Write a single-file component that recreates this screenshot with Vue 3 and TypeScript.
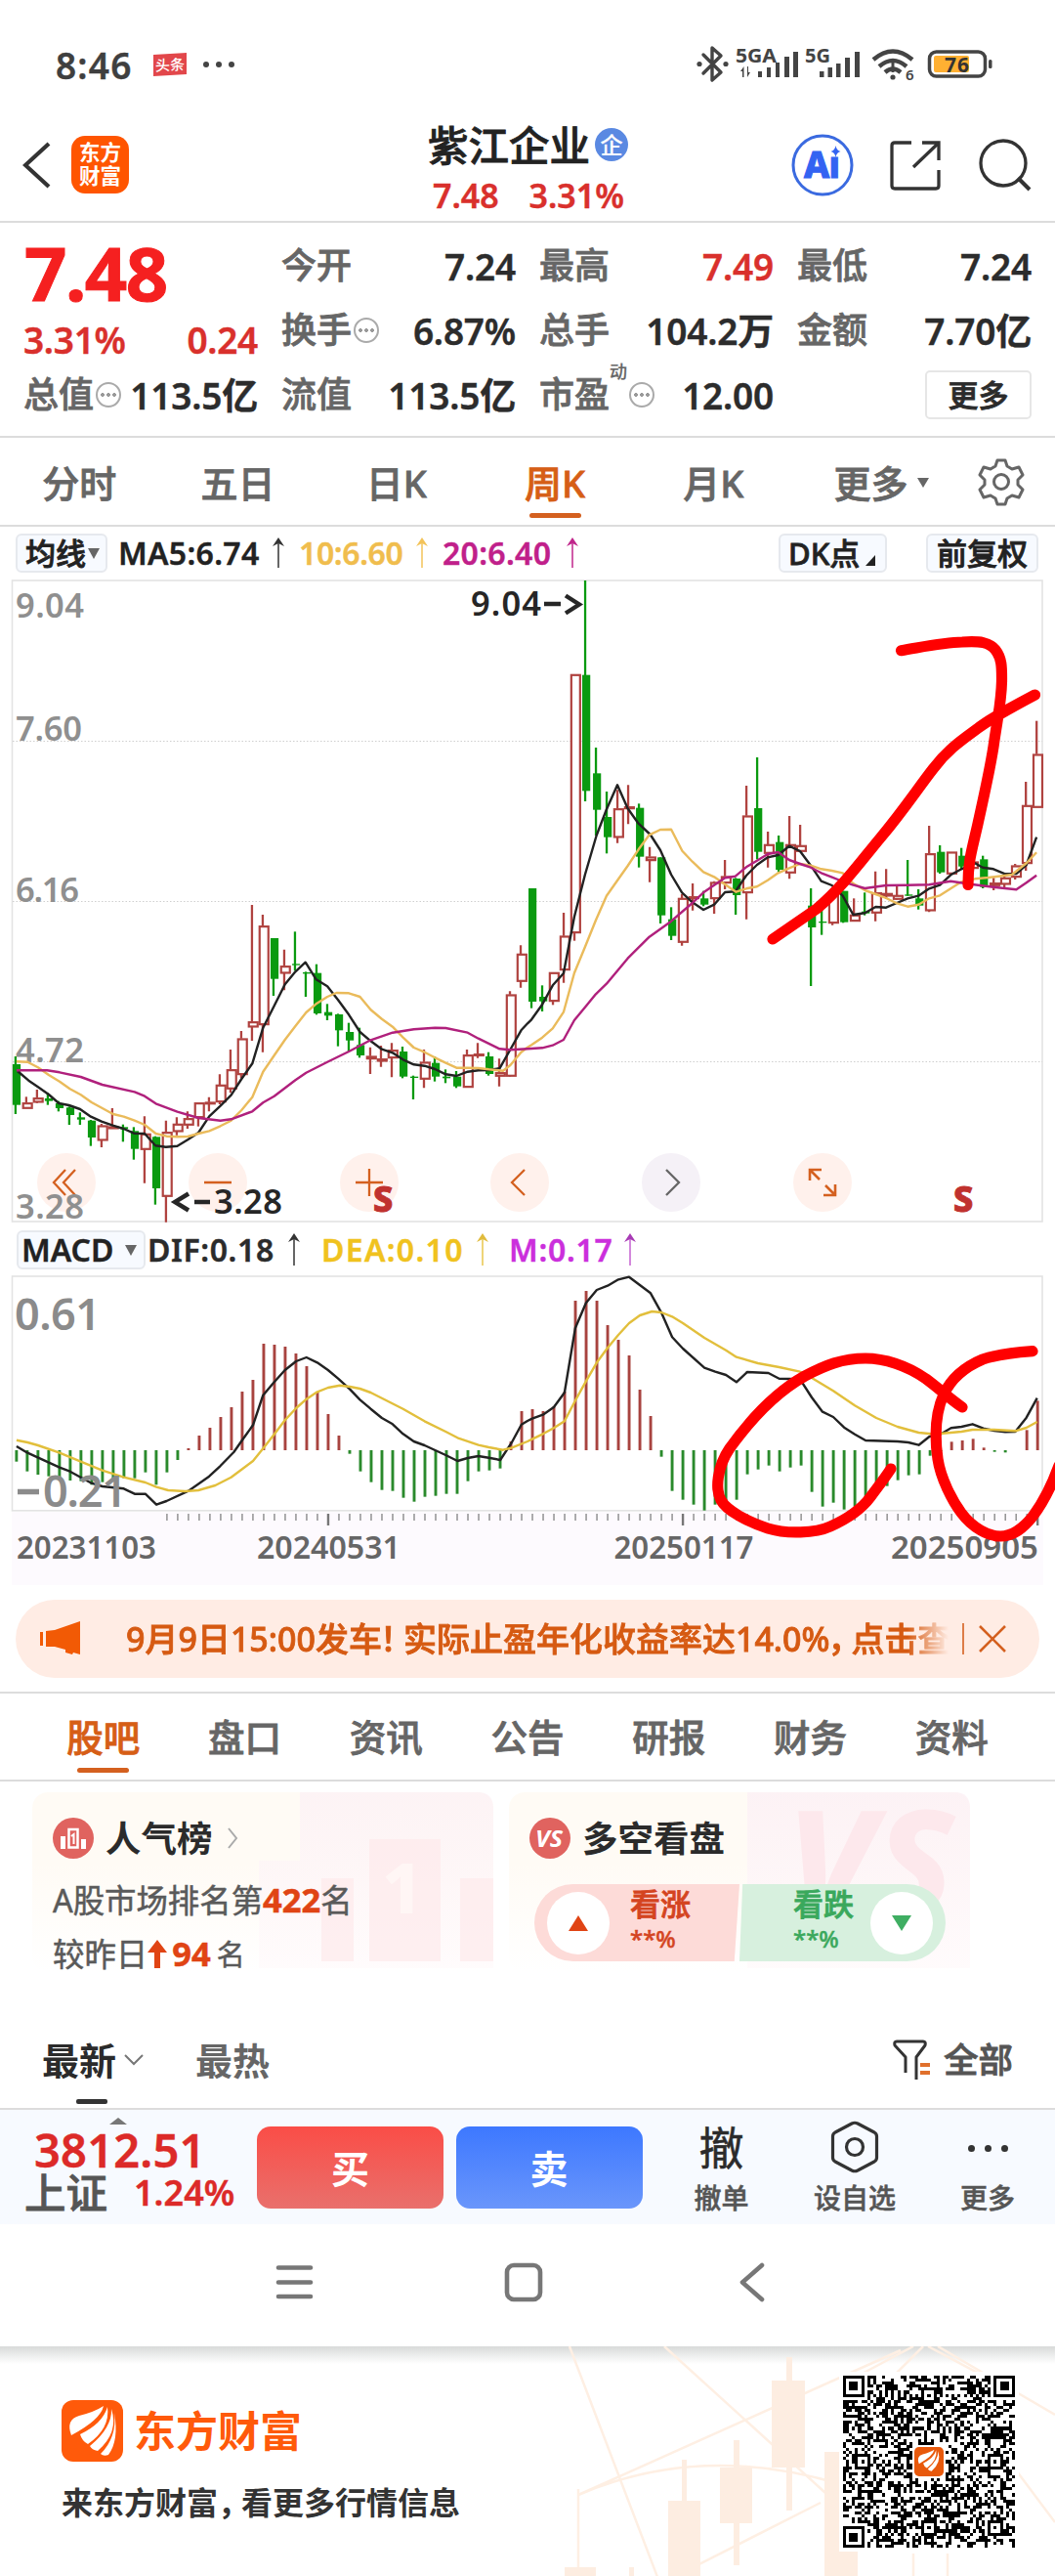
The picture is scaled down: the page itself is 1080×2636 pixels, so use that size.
<script setup lang="ts">
type Pt = [number, number]
type Candle = [0 | 1, number, number, number, number]

// Series data is stored on a fine grid; these map a grid point to chart pixels.
const SX = 2.9037
const SY = 3
const STEP = 31.95
const line = (left: number[], right: number[], top: number): string => {
  const out: string[] = []
  const add = (a: number[], off: number) => {
    for (let i = 0; i < a.length; i += 2) {
      out.push(`${((a[i] + off) / SX).toFixed(1)},${(top + a[i + 1] / SY).toFixed(1)}`)
    }
  }
  add(left, 0)
  add(right, 1568)
  return out.join(' ')
}

// [rising, high, body top, body bottom, low]
const candles: Candle[] = [
  [0, 543, 567, 692, 720], [1, 667, 685, 702, 702], [1, 645, 670, 683, 686], [0, 655, 672, 680, 692],
  [0, 680, 687, 702, 712], [0, 697, 700, 723, 753], [0, 715, 730, 737, 753], [0, 738, 740, 792, 818],
  [1, 750, 755, 800, 822], [1, 702, 758, 764, 764], [0, 752, 760, 766, 805], [0, 760, 772, 827, 860],
  [1, 727, 780, 828, 932], [0, 788, 790, 948, 998], [1, 740, 775, 972, 1052], [1, 730, 750, 773, 785],
  [1, 712, 733, 753, 765], [1, 685, 685, 730, 758], [1, 668, 683, 687, 712], [1, 598, 630, 682, 690],
  [1, 522, 583, 642, 655], [1, 465, 488, 598, 610], [1, 78, 436, 452, 495], [1, 108, 142, 445, 530],
  [0, 180, 180, 305, 357], [1, 215, 265, 287, 340], [0, 160, 259, 262, 280], [0, 283, 285, 289, 360],
  [0, 260, 287, 411, 415], [0, 382, 407, 418, 432], [0, 412, 414, 463, 512], [0, 440, 468, 494, 528],
  [0, 455, 508, 540, 547], [1, 515, 542, 550, 597], [1, 510, 550, 557, 575], [1, 502, 523, 547, 607],
  [0, 513, 528, 605, 610], [0, 602, 605, 609, 675], [1, 522, 560, 612, 640], [0, 543, 563, 605, 620],
  [0, 583, 605, 610, 625], [0, 588, 605, 635, 640], [1, 522, 538, 637, 637], [1, 502, 535, 540, 548],
  [0, 530, 543, 597, 602], [1, 550, 592, 603, 635], [1, 343, 353, 603, 605], [1, 202, 228, 312, 332],
  [0, 27, 27, 375, 395], [0, 325, 360, 374, 405], [1, 285, 285, 373, 385], [1, 102, 173, 277, 317],
  [1, -630, -630, 163, 188], [0, -918, -628, -272, -240], [0, -405, -326, -214, -135], [0, -270, -192, -130, -80],
  [1, -275, -218, -130, -112], [1, -290, -224, -218, -170], [0, -233, -220, -70, -37], [1, -100, -70, -59, 8],
  [0, -68, -68, 110, 135], [0, 85, 122, 173, 186], [1, 45, 57, 192, 203], [1, 12, 52, 58, 95],
  [0, 35, 58, 77, 82], [1, 5, 8, 58, 105], [1, -60, -10, 10, 30], [0, -5, -3, 48, 108],
  [1, -288, -196, 40, 122], [0, -375, -219, -85, -62], [1, -147, -108, -81, -37], [0, -135, -115, -30, -22],
  [1, -195, -108, -21, -2], [1, -168, -105, -87, -87], [0, 27, 80, 147, 327], [0, 80, 129, 132, 170],
  [1, 30, 45, 133, 140], [0, 35, 35, 131, 133], [1, 58, 108, 127, 127], [0, 40, 98, 104, 110],
  [1, -25, 40, 102, 128], [1, -32, 42, 50, 60], [1, 15, 48, 60, 62], [0, -60, 46, 50, 50],
  [0, 30, 58, 80, 92], [1, -165, -80, 95, 100], [0, -105, -85, -22, -18], [1, -85, -85, -18, -18],
  [0, -97, -73, -40, -30], [1, -70, -55, -35, -30], [0, -73, -62, 23, 27], [1, -5, 10, 18, 33],
  [1, -12, -6, 14, 27], [1, -48, -43, -8, 0], [1, -300, -228, -50, -27], [1, -487, -385, -222, -222],
]
const bars = candles.map(([up, h, t, b, l], i) => {
  const x = (49 + STEP * i) / SX
  return {
    up: up === 1, x,
    high: 900 + h / SY, top: 900 + t / SY, bottom: 900 + b / SY, low: 900 + l / SY,
  }
})

const ma5 = line(
  [52,588,85,617,115,638,145,660,175,687,205,693,238,705,270,728,302,743,335,755,367,765,398,779,430,780,462,817,493,821,527,818,558,799,590,777,622,727,655,695,687,662,718,612,750,565,782,455,815,388,847,322,878,283,908,254,940,307,973,328,1005,370,1037,415,1070,468,1102,496,1135,521,1167,532,1198,553,1230,568,1262,572,1293,582,1325,598,1357,603,1390,590,1422,586,1453,585,1485,580,1517,522,1549,463],
  [0,442,12,430,44,383,75,325,107,288,139,115,171,-15,205,-135,235,-215,267,-290,298,-218,330,-172,365,-138,395,-90,427,-15,459,40,490,70,523,93,555,77,587,39,618,37,650,-12,682,-45,714,-68,745,-75,778,-103,810,-87,842,-43,873,5,905,18,937,50,968,108,1003,103,1035,84,1066,86,1098,72,1130,58,1162,50,1194,28,1226,17,1258,-14,1290,-32,1330,-50,1353,-37,1385,-32,1420,-17,1453,-18,1483,-45,1513,-130], 900)
const ma10 = line(
  [49,559,82,560,113,577,145,600,177,620,208,643,240,661,272,684,304,702,336,720,368,728,400,740,430,753,463,780,495,788,527,790,558,789,590,780,622,772,655,757,687,740,718,708,750,668,782,590,815,540,847,492,878,450,910,408,942,380,973,360,1000,348,1037,349,1070,360,1102,400,1135,428,1167,452,1198,485,1230,516,1262,530,1293,547,1325,563,1357,578,1390,578,1422,579,1453,583,1495,587,1517,570,1549,530],
  [0,515,12,508,44,485,75,457,107,407,139,287,171,207,203,125,235,50,267,3,298,-42,330,-92,362,-137,395,-153,427,-154,460,-88,490,-55,523,-23,555,-8,587,15,620,38,650,28,682,22,714,2,745,-20,778,-35,810,-48,842,-43,873,-32,905,-27,937,-20,968,12,1003,33,1035,45,1066,57,1098,73,1130,83,1162,77,1194,58,1226,49,1258,28,1290,7,1330,-2,1370,-6,1400,-10,1440,-15,1483,-50,1513,-83], 900)
const ma20 = line(
  [49,586,140,586,177,592,240,606,304,630,400,652,430,665,463,688,527,713,590,732,655,740,687,736,750,712,782,685,815,665,878,616,910,593,973,560,1037,528,1102,493,1167,470,1230,460,1293,455,1325,456,1390,470,1422,488,1485,520,1517,523],
  [0,520,12,519,44,517,75,509,107,492,139,432,171,392,203,352,235,320,298,242,362,176,427,128,490,72,523,40,555,17,587,-5,618,-10,650,-38,682,-58,714,-78,745,-84,778,-60,810,-48,842,-37,873,-20,905,-7,937,6,968,17,1003,27,1066,18,1130,17,1194,16,1258,5,1322,15,1385,23,1453,31,1483,10,1513,-13], 900)

const dif = line(
  [49,720,82,740,177,785,208,797,272,833,304,843,368,850,400,866,432,866,465,899,495,888,560,857,622,812,655,780,695,738,722,698,752,655,782,563,815,523,847,486,880,459,911,447,943,463,975,486,1005,512,1040,545,1070,577,1102,605,1135,633,1167,652,1198,682,1230,705,1262,717,1325,747,1360,765,1390,756,1422,750,1453,755,1487,762,1520,710,1550,653],
  [0,642,14,635,46,623,78,600,110,555,142,357,174,280,206,240,238,227,270,208,302,200,366,250,398,310,430,385,462,420,526,479,558,491,590,501,621,523,653,492,716,495,748,512,810,514,845,570,877,614,909,630,941,662,973,683,1005,702,1100,705,1132,708,1163,716,1195,690,1227,683,1259,664,1290,660,1323,652,1355,665,1387,672,1420,676,1450,675,1483,632,1515,572], 1240)
const dea = line(
  [49,701,82,708,113,717,177,740,240,767,304,794,368,815,432,831,465,845,500,855,550,858,590,855,640,840,687,815,720,790,752,765,782,727,815,683,847,640,880,603,911,575,943,553,975,540,1010,533,1040,537,1070,543,1102,555,1135,572,1198,605,1262,643,1325,675,1360,694,1422,716,1453,723,1495,731,1520,725],
  [0,705,14,698,46,682,78,664,110,643,142,580,174,520,206,463,238,418,270,378,302,342,334,318,370,306,398,309,430,322,462,342,526,387,590,425,621,446,685,465,748,477,810,491,845,510,909,550,973,595,1037,633,1100,660,1163,678,1200,682,1227,681,1290,675,1323,669,1387,669,1450,673,1483,663,1515,645], 1240)
const hist = [
  767,797,807,812,817,825,827,838,830,825,818,818,800,838,800,762,726,687,663,630,600,552,516,405,408,414,435,474,552,621,687,743,797,830,854,857,878,890,875,872,866,866,827,797,794,788,705,612,
  606,612,597,552,273,243,273,348,393,441,546,627,752,857,884,899,917,899,905,884,806,791,779,797,785,779,860,905,893,914,905,875,860,842,824,809,806,749,735,706,702,697,724,737,739,732,670,580,
].map((v, i) => ({ x: (49 + STEP * i) / SX, y: 1240 + v / SY, up: v < 732 }))
const ticks = Array.from({ length: 82 }, (_, k) => k + 14).map(i => ({
  x: (49 + STEP * i) / SX, major: i === 29 || i === 62 || i === 95,
}))

const tools = [68, 223, 378, 532, 687, 842]
const periods = ['分时', '五日', '日K', '周K', '月K']
const sections = ['股吧', '盘口', '资讯', '公告', '研报', '财务', '资料']

// QR code: finder, alignment and timing patterns with a filled data area.
const N = 57
const qr = (() => {
  let seed = 20250905
  const rnd = () => {
    seed = (Math.imul(seed, 1103515245) + 12345) & 0x7fffffff
    return (seed >> 12) & 1
  }
  const ring = (x: number, y: number, cx: number, cy: number) => Math.max(Math.abs(x - cx), Math.abs(y - cy))
  const finders: Pt[] = [[3, 3], [53, 3], [3, 53]]
  const aligns: Pt[] = [[28, 6], [50, 28], [6, 28], [28, 50], [50, 50]]
  let d = ''
  for (let y = 0; y < N; y++) {
    for (let x = 0; x < N; x++) {
      let on = rnd() === 1
      if (x === 6 || y === 6) on = (x + y) % 2 === 0
      for (const [cx, cy] of aligns) {
        const r = ring(x, y, cx, cy)
        if (r <= 2) on = r !== 1
      }
      for (const [cx, cy] of finders) {
        const r = ring(x, y, cx, cy)
        if (r <= 4) on = r !== 2 && r !== 4
      }
      if (ring(x, y, 28, 28) <= 5) on = false
      if (on) d += `M${x} ${y}h1v1h-1z`
    }
  }
  return d
})()
</script>

<template>
  <div class="screen">
    <header class="status">
      <span class="clock">8:46</span>
      <span class="news">头条</span>
      <i class="dots"><b></b><b></b><b></b></i>
      <svg class="sys" width="320" height="50" viewBox="706 41 320 50">
        <g fill="none" stroke="#444" stroke-width="3.4" stroke-linejoin="round" stroke-linecap="round">
          <path d="M720 56l18 18-9 8V49l9 8-18 18" />
        </g>
        <circle cx="716" cy="65.500" r="2.600" fill="#444" /><circle cx="743" cy="65.500" r="2.600" fill="#444" />
        <g fill="#444">
          <text x="753" y="64" font-size="19.500" font-weight="700" textLength="42" lengthAdjust="spacingAndGlyphs">5GA</text>
          <text x="824" y="64" font-size="19.500" font-weight="700" textLength="26" lengthAdjust="spacingAndGlyphs">5G</text>
          <path d="M760 79v-6h-2l3.500-5v11zM766 68v6h2l-3 5v-11zM776 79v-6h4v6zM785 79V69h4v10zM794 79V64h4v15zM803 79V58h5v21zM812 79V53h5v26z" />
          <path d="M839 79v-6h4.500v6zM847.500 79V69h4.500v10zM856 79V65h4.500v14zM865 79V59h5v20zM875 79V53h5v26z" />
          <circle cx="914" cy="79" r="2.600" />
          <text x="927" y="82" font-size="15" font-weight="600">6</text>
        </g>
        <g fill="none" stroke="#444" stroke-width="4.400">
          <path d="M894 61q20-17 40 0M900 68q14-12 28 0M906 74q8-7 16 0" />
          <path d="M914 63v11" stroke-width="3" />
        </g>
        <rect x="951.500" y="53" width="57" height="25" rx="7" fill="#fff" stroke="#444" stroke-width="3.500" />
        <rect x="956" y="57" width="36" height="17" rx="2" fill="#ffb032" />
        <rect x="1012" y="61" width="3.500" height="9" rx="1.500" fill="#444" />
        <text x="967" y="73.500" font-size="21" font-weight="700" fill="#333" textLength="25">76</text>
      </svg>
    </header>

    <div class="head">
      <svg class="back" width="30" height="48" viewBox="0 0 30 48"><path d="M27 2L3 24l24 22" fill="none" stroke="#333" stroke-width="4.200" /></svg>
      <span class="app">东方<br />财富</span>
      <div class="title">
        <div class="name">紫江企业<i>企</i></div>
        <div class="sub"><span>7.48</span><span>3.31%</span></div>
      </div>
      <svg class="acts" width="250" height="70" viewBox="806 134 250 70" fill="none">
        <circle cx="842" cy="169" r="30" stroke="#3a6ae0" stroke-width="3" />
        <text x="823" y="182" font-size="37" font-weight="800" fill="#3363f2" stroke="#3363f2" stroke-width="1" textLength="37">Aı</text>
        <path d="M855.500 149q.8 5.200 5 6-4.200.8-5 6-.8-5.200-5-6 4.200-.8 5-6z" fill="#3363f2" />
        <g stroke="#333" stroke-width="3.300">
          <path d="M933 146h-17q-3 0-3 3v41q0 3 3 3h42q3 0 3-3v-16M944 146h17v18M960 147l-25 24" />
          <circle cx="1027" cy="167" r="23" /><path d="M1042 182l12 12" stroke-width="4" />
        </g>
      </svg>
    </div>

    <section class="quote">
      <div class="col first">
        <div class="big">7.48</div>
        <div class="chg"><span>3.31%</span><span>0.24</span></div>
        <div class="cell"><label>总值</label><i class="info"></i><b>113.5亿</b></div>
      </div>
      <div class="col">
        <div class="cell"><label>今开</label><b>7.24</b></div>
        <div class="cell"><label>换手</label><i class="info"></i><b>6.87%</b></div>
        <div class="cell"><label>流值</label><b>113.5亿</b></div>
      </div>
      <div class="col">
        <div class="cell"><label>最高</label><b class="red">7.49</b></div>
        <div class="cell"><label>总手</label><b>104.2万</b></div>
        <div class="cell"><label>市盈<sup>动</sup></label><i class="info pe"></i><b>12.00</b></div>
      </div>
      <div class="col">
        <div class="cell"><label>最低</label><b>7.24</b></div>
        <div class="cell"><label>金额</label><b>7.70亿</b></div>
        <div class="cell end"><span class="morebtn">更多</span></div>
      </div>
    </section>

    <nav class="periods">
      <span v-for="p in periods" :key="p" :class="{ on: p === '周K' }">{{ p }}</span>
      <span class="pm">更多<i></i></span>
      <svg width="48" height="50" viewBox="0 0 48 50" fill="none" stroke="#666" stroke-width="3" stroke-linejoin="round">
        <path d="M20 3h8l2 6 5 3 7-2 4 8-5 5v5l5 5-4 8-7-2-5 3-2 6h-8l-2-6-5-3-7 2-4-8 5-5v-5l-5-5 4-8 7 2 5-3z" /><circle cx="24" cy="25" r="7.500" />
      </svg>
    </nav>

    <div class="legend ma">
      <span class="pill avg">均线<i class="dn"></i></span>
      <span class="k1">MA5:6.74</span><svg class="up" width="14" height="32" viewBox="0 0 14 32"><path d="M7 31V2" stroke="#333" stroke-width="1.500" /><path d="M7 0L1 9l6-3 6 3z" fill="#333" /></svg>
      <span class="k2">10:6.60</span><svg class="up" width="14" height="32" viewBox="0 0 14 32"><path d="M7 31V2" stroke="#f3c35a" stroke-width="1.500" /><path d="M7 0L1 9l6-3 6 3z" fill="#f3c35a" /></svg>
      <span class="k3">20:6.40</span><svg class="up" width="14" height="32" viewBox="0 0 14 32"><path d="M7 31V2" stroke="#c0268b" stroke-width="1.500" /><path d="M7 0L1 9l6-3 6 3z" fill="#c0268b" /></svg>
      <span class="pill dk">DK点<i></i></span>
      <span class="pill fq">前复权</span>
    </div>

    <svg class="chart" width="1080" height="660" viewBox="0 593 1080 660">
      <rect x="12.500" y="594" width="1054.500" height="656" fill="none" stroke="#e3e3e3" stroke-width="1.600" />
      <g stroke="#cfcfcf" stroke-width="1" stroke-dasharray="1.500 2">
        <path d="M13 758.500H1067M13 922.500H1067M13 1086.500H1067" />
      </g>
      <g v-for="(x, i) in tools" :key="x">
        <circle :cx="x" cy="1210" r="30" :fill="i === 4 ? '#f5f1f7' : '#fff1ec'" />
      </g>
      <g fill="none" stroke="#d4601f" stroke-width="2.300">
        <path d="M67 1197l-12 13 12 13M77 1197l-12 13 12 13M209 1210h28M364 1210h28M378 1196v28M537 1197l-13 13 13 13" />
        <path d="M682 1197l13 13-13 13" stroke="#666" />
        <path d="M829 1208v-11h12M829 1197l10 10M855 1212v11h-12M855 1223l-10-10" stroke-width="2.600" />
      </g>
      <g fill="#8f8f8f" font-size="34.500" font-weight="600">
        <text x="16" y="632" textLength="70">9.04</text>
        <text x="16" y="758" textLength="68">7.60</text>
        <text x="16" y="922.500" textLength="65">6.16</text>
        <text x="16" y="1087" textLength="70">4.72</text>
        <text x="16" y="1246.500" textLength="70">3.28</text>
      </g>
      <g v-for="(b, i) in bars" :key="i">
        <template v-if="b.up">
          <path :d="`M${b.x - 1} ${b.high}V${b.top}M${b.x - 1} ${b.bottom}V${b.low}`" stroke="#b04340" stroke-width="2.300" />
          <rect :x="b.x - 4.200" :y="b.top + .8" width="9" :height="Math.max(b.bottom - b.top - 1, .8)" fill="#fff" stroke="#b04340" stroke-width="2.200" />
        </template>
        <template v-else>
          <path :d="`M${b.x - 1} ${b.high}V${b.low}`" stroke="#0a9a10" stroke-width="2.300" />
          <rect :x="b.x - 4" :y="b.top" width="8.200" :height="Math.max(b.bottom - b.top, 1.300)" fill="#0a9a10" />
        </template>
      </g>
      <g fill="none" stroke-width="2.400" stroke-linejoin="round">
        <polyline :points="ma5" stroke="#222" />
        <polyline :points="ma10" stroke="#eabb5b" />
        <polyline :points="ma20" stroke="#b0207c" />
      </g>
      <g fill="#262626" font-size="34.500" font-weight="600">
        <text x="482" y="630" textLength="72">9.04</text>
        <path d="M557 618h17M579 609.500l14 9-14 9" fill="none" stroke="#262626" stroke-width="4.400" />
        <path d="M193 1221.500l-14 8.500 14 8.500M199 1230h16" fill="none" stroke="#262626" stroke-width="4.400" />
        <text x="219" y="1241.500" textLength="70">3.28</text>
      </g>
      <g fill="#c0322e" font-size="36" font-weight="800" stroke="#c0322e" stroke-width="1">
        <text x="382" y="1240">S</text><text x="976" y="1240">S</text>
      </g>
      <g fill="none" stroke="#f00" stroke-width="11.200" stroke-linecap="round" stroke-linejoin="round">
        <path d="M922.500 665.700C945 662 965 657.500 985 657C1004 656 1012 657 1019 665C1026 674 1025.500 684 1025.500 697C1025 720 1021 735 1017 764C1013 790 1006 820 1001 843C995 870 991 880 991 905.500" />
        <path d="M791 961L836 930C862 908 880 883 901.600 857C925 829 938 809 955 787C970 767 985 757 1000 746C1010 738 1022 731 1059.500 711" />
      </g>
    </svg>

    <div class="legend macd">
      <span class="pill">MACD<i class="dn"></i></span>
      <span class="d1">DIF:0.18</span><svg class="up" width="14" height="34" viewBox="0 0 14 34"><path d="M7 33V2" stroke="#333" stroke-width="1.500" /><path d="M7 0L1 9l6-3 6 3z" fill="#333" /></svg>
      <span class="d2">DEA:0.10</span><svg class="up" width="14" height="34" viewBox="0 0 14 34"><path d="M7 33V2" stroke="#e9c64b" stroke-width="1.500" /><path d="M7 0L1 9l6-3 6 3z" fill="#e0bb3c" /></svg>
      <span class="d3">M:0.17</span><svg class="up" width="14" height="34" viewBox="0 0 14 34"><path d="M7 33V2" stroke="#c45fd0" stroke-width="1.500" /><path d="M7 0L1 9l6-3 6 3z" fill="#a83bb5" /></svg>
    </div>

    <svg class="chart" width="1080" height="317" viewBox="0 1305 1080 317">
      <rect x="12" y="1547" width="1056" height="75" fill="#fdfafe" />
      <rect x="12.500" y="1306" width="1054.500" height="239.800" fill="#fff" stroke="#e3e3e3" stroke-width="1.600" />
      <path v-for="(h, i) in hist" :key="i" :d="`M${h.x} 1484V${h.y}`" :stroke="h.up ? '#a8433f' : '#2a8a2c'" stroke-width="2.900" />
      <path v-for="t in ticks" :key="t.x" :d="`M${t.x} 1549V${t.major ? 1561 : 1556}`" stroke="#777" :stroke-width="t.major ? 2.4 : 1.2" />
      <g fill="none" stroke-width="2.400" stroke-linejoin="round">
        <polyline :points="dif" stroke="#222" />
        <polyline :points="dea" stroke="#e2bf3c" />
      </g>
      <g fill="#8b8b8b" font-size="45" font-weight="600">
        <text x="15" y="1361" textLength="88">0.61</text>
        <path d="M18 1526.500h22" stroke="#8b8b8b" stroke-width="5.500" />
        <text x="44" y="1542" textLength="86">0.21</text>
      </g>
      <g fill="#666" font-size="32.500" font-weight="600">
        <text x="17" y="1595" textLength="143" lengthAdjust="spacingAndGlyphs">20231103</text>
        <text x="263" y="1595" textLength="147" lengthAdjust="spacingAndGlyphs">20240531</text>
        <text x="628.500" y="1595" textLength="143" lengthAdjust="spacingAndGlyphs">20250117</text>
        <text x="912" y="1595" textLength="151" lengthAdjust="spacingAndGlyphs">20250905</text>
      </g>
      <g fill="none" stroke="#f00" stroke-width="11.200" stroke-linecap="round" stroke-linejoin="round">
        <path d="M985 1440C972 1431 964 1423 948 1411C928 1397 905 1390 886 1390C862 1390 845 1397 824 1408C790 1427 765 1457 747 1482C734 1501 732 1524 738 1535C744 1546 765 1557 786 1564C805 1570 835 1569 850 1562C868 1554 882 1544 891 1532C899 1521 904 1515 912 1503" />
        <path d="M1057 1382.700C1040 1384 1020 1386 1006 1391C987 1399 973 1412 966 1427C957 1447 957 1472 960 1493C963 1513 975 1536 984 1548C996 1564 1012 1572 1024 1572C1038 1572 1048 1563 1057 1552C1069 1536 1076 1522 1084 1500" />
      </g>
    </svg>

    <div class="banner">
      <svg width="42" height="36" viewBox="0 0 42 36" fill="#f25a05"><path d="M0 11h3v14H0zM6 10l9-1L41 0v34l-7-2-1 2-7-2v-3l-11-3H6z" /></svg>
      <div class="msg">9月9日15:00发车<em>！</em>实际止盈年化收益率达14.0%<em class="comma">，</em>点击查看</div>
      <i class="bar"></i>
      <svg class="x" width="30" height="30" viewBox="0 0 30 30"><path d="M2 2l26 26M28 2L2 28" stroke="#d4601f" stroke-width="2.600" /></svg>
    </div>

    <nav class="sections">
      <span v-for="s in sections" :key="s" :class="{ on: s === '股吧' }">{{ s }}</span>
    </nav>

    <div class="cards">
      <div class="card">
        <svg class="art" width="472" height="180" viewBox="0 0 472 180">
          <defs><linearGradient id="fade" x1="0" y1="0" x2="0" y2="1"><stop offset="0" stop-color="#fcf0f5" /><stop offset="1" stop-color="#fffafb" /></linearGradient></defs>
          <path d="M274 0h182q16 0 16 16v164H232V70h42z" fill="url(#fade)" opacity=".7" />
          <path d="M345 48h73v125h-73zM296 88h33v85h-33zM438 88h34v85h-34z" fill="#fdeaeb" opacity=".7" />
          <text x="358" y="124" font-size="72" font-weight="800" fill="#fff6f5">1</text>
        </svg>
        <div class="ct">
          <svg width="42" height="42" viewBox="0 0 42 42"><circle cx="21" cy="21" r="21" fill="#e0635f" /><path d="M8 19h5v13H8zM29 22h5v10h-5z" fill="#fff" /><path d="M16.500 12h9v18.500h-9z" fill="none" stroke="#fff" stroke-width="2.500" /><path d="M19 19l2.500-2v10" fill="none" stroke="#fff" stroke-width="2" /></svg>
          <strong>人气榜</strong>
          <svg class="go" width="12" height="22" viewBox="0 0 12 22"><path d="M2 1l8 10-8 10" fill="none" stroke="#aaa" stroke-width="2" /></svg>
        </div>
        <p class="rank">A股市场排名第<b>422</b>名</p>
        <p class="rank r2">较昨日<svg width="20" height="29" viewBox="0 0 20 29"><path d="M10 0l10 13h-7v16H7V13H0z" fill="#e04414" /></svg><b>94</b><u>名</u></p>
      </div>
      <div class="card">
        <svg class="art" width="472" height="180" viewBox="0 0 472 180">
          <path d="M244 0h212q16 0 16 16v164H244z" fill="url(#fade)" opacity=".8" />
          <text x="284" y="124" font-size="146" font-weight="800" font-style="italic" fill="#fde8ec" textLength="172" lengthAdjust="spacingAndGlyphs">VS</text>
        </svg>
        <div class="ct">
          <svg width="42" height="42" viewBox="0 0 42 42"><circle cx="21" cy="21" r="21" fill="#e0635f" /><text x="6" y="30" font-size="24" font-weight="700" font-style="italic" fill="#fff" textLength="28" lengthAdjust="spacingAndGlyphs">VS</text></svg>
          <strong>多空看盘</strong>
        </div>
        <div class="vote">
          <div class="bull"><i><svg width="20" height="16"><path d="M10 0l10 16H0z" fill="#e04414" /></svg></i><div><b>看涨</b><span>**%</span></div></div>
          <div class="bear"><div><b>看跌</b><span>**%</span></div><i><svg width="20" height="16"><path d="M0 0h20L10 16z" fill="#3fae62" /></svg></i></div>
        </div>
      </div>
    </div>

    <div class="sort">
      <span class="cur">最新</span>
      <svg class="ar" width="20" height="12" viewBox="0 0 20 12"><path d="M1 1l9 9 9-9" fill="none" stroke="#777" stroke-width="2" /></svg>
      <span class="hot">最热</span>
      <svg class="fl" width="40" height="42" viewBox="0 0 40 42" fill="none" stroke="#333" stroke-width="3" stroke-linejoin="round"><path d="M13 34V18L2 6q-1-4 2-4h27q3 0 2 4L24 18v23" /><path d="M28 26h10M28 34h10" stroke="#e0702c" stroke-width="4" /></svg>
      <span class="all">全部</span>
    </div>

    <div class="trade">
      <div class="index">
        <i></i>
        <div class="pt">3812.51</div>
        <div class="nm"><span>上证</span><b>1.24%</b></div>
      </div>
      <button class="buy">买</button>
      <button class="sell">卖</button>
      <div class="op o1"><span class="g">撤</span><label>撤单</label></div>
      <div class="op o2"><svg width="50" height="54" viewBox="0 0 50 54" fill="none" stroke="#333" stroke-width="3.200" stroke-linejoin="round"><path d="M22 3q3-1.500 6 0l17 9q2.500 1.500 2.500 4v22q0 2.500-2.500 4l-17 9q-3 1.500-6 0L5 42q-2.500-1.500-2.500-4V16q0-2.500 2.500-4z" /><circle cx="25" cy="27" r="8.500" /></svg><label>设自选</label></div>
      <div class="op o3"><i class="dots"><b></b><b></b><b></b></i><label>更多</label></div>
    </div>

    <div class="sysnav">
      <svg width="1080" height="125" viewBox="0 2275 1080 125" fill="none" stroke="#777" stroke-width="4.600" stroke-linecap="round" stroke-linejoin="round">
        <path d="M285 2319.500h33M285 2334.500h33M285 2349h33M780 2317l-20 17.500 20 17.500" /><rect x="519" y="2317" width="34" height="35" rx="7" />
      </svg>
    </div>

    <footer class="foot">
      <svg class="deco" width="540" height="236" viewBox="540 2400 540 236">
        <g fill="none" stroke="#feefe3" stroke-width="2.500">
          <path d="M583 2400l90 236M680 2400l165 150M592 2552l330-148M592 2546v90M690 2636l150-76M592 2552q140-60 300 0M935 2400l-75 40M945 2400l-50 50M950 2400l75 40M960 2400l120 70M1035 2520l45 60M935 2612v24M970 2612v24" />
        </g>
        <g fill="#fdede1">
          <path d="M790 2435h34v89h-34zM805 2411h6v157h-6zM737 2524h33v57h-33zM751 2496h6v128h-6zM684 2558h33v78h-33zM698 2516h5v60h-5zM844 2508h34v128h-34zM578 2626h32v10h-32zM644 2626h5v10h-5z" />
        </g>
      </svg>
      <div class="brand">
        <div class="logo">
          <svg width="63" height="63" viewBox="0 0 63 63"><rect width="63" height="63" rx="12" fill="#ff5a0a" /><path d="M43 6Q40 20 10 36 4 20 18 16 34 12 43 6zM47 7q3 22-20 38-6-3-8-10Q42 24 47 7zM51 9q8 24-14 43-6-1-8-5Q52 28 51 9zM54 13q5 28-6 43-5 2-8-1Q57 38 54 13z" fill="#fff" /></svg>
          <span>东方财富</span>
        </div>
        <p>来东方财富<em>，</em>看更多行情信息</p>
      </div>
      <div class="qr">
        <svg width="176" height="176" viewBox="0 0 57 57"><path :d="qr" fill="#000" shape-rendering="crispEdges" /></svg>
        <svg class="mini" width="30" height="30" viewBox="0 0 63 63"><rect width="63" height="63" rx="10" fill="#e8590c" /><path d="M43 6Q40 20 10 36 4 20 18 16 34 12 43 6zM47 7q3 22-20 38-6-3-8-10Q42 24 47 7zM51 9q8 24-14 43-6-1-8-5Q52 28 51 9z" fill="#fff" /></svg>
      </div>
    </footer>
  </div>
</template>

<style>
body { margin: 0; background: #fff; }
</style>

<style scoped>
.screen, .screen * { box-sizing: border-box; }
.screen { width: 1080px; height: 2636px; overflow: hidden; background: #fff; display: flex; flex-direction: column; font-family: 'Noto Sans', 'Noto Sans CJK SC', sans-serif; line-height: 1; color: #2b2b2b; }
.screen > * { flex: none; }
svg { display: block; flex: none; }
i, em { font-style: normal; }
b { font-weight: 600; }
p { margin: 0; }

/* medium weight for Chinese labels */
.name, .cell label, .morebtn, .periods span, .pill, .msg, .sections span, .rank, .vote b, .vote span, .all, .nm span, .op label { -webkit-text-stroke: .8px currentColor; }
.chart text, .clock, .sub, .chg, .cell b, .k1, .k2, .k3, .d1, .d2, .d3, .pt, .nm b { -webkit-text-stroke: .4px currentColor; }
.rank { -webkit-text-stroke-width: .5px; }
.cell sup, .name i { -webkit-text-stroke-width: .2px; }

.status { height: 132px; display: flex; align-items: center; padding: 0 54px 0 57px; }
.clock { font-size: 37px; font-weight: 600; letter-spacing: 1.2px; color: #3f3f3f; width: 100px; }
.news { width: 34px; height: 22px; background: #e2474b; color: #fff; font-size: 15px; font-weight: 500; display: flex; align-items: center; justify-content: center; transform: skewY(-3deg); }
.dots { display: flex; gap: 7px; }
.dots b { width: 6px; height: 6px; border-radius: 50%; background: #444; }
.status .dots { margin-left: 17px; }
.sys { margin-left: auto; }

.head { height: 96px; border-bottom: 2px solid #dcdcdc; display: flex; align-items: flex-start; padding: 0 24px 0 23px; }
.back { margin-top: 13px; }
.app { margin: 7px 0 0 20px; width: 59px; height: 59px; border-radius: 14px; background: #ff5500; color: #fff; font-size: 21.500px; line-height: 24px; font-weight: 600; text-align: center; padding-top: 5px; }
.title { width: 220px; margin: -3px 0 0 302px; }
.name { display: flex; font-size: 41.500px; font-weight: 500; color: #222; margin-left: 4px; white-space: nowrap; }
.name i { flex: none; margin: 2px 0 0 5px; width: 34px; height: 34px; border-radius: 50%; background: #5a89e2; color: #fff; font-size: 23px; display: flex; align-items: center; justify-content: center; }
.sub { display: flex; justify-content: space-between; width: 196px; margin: 12px 0 0 9px; font-size: 34px; font-weight: 600; color: #d9302c; }
.acts { margin-left: auto; margin-top: 2px; }

.quote { height: 220px; border-bottom: 2px solid #dcdcdc; display: flex; justify-content: space-between; padding: 11px 24px 0 24px; }
.col { width: 240px; display: flex; flex-direction: column; }
.cell { height: 66px; display: flex; align-items: center; white-space: nowrap; }
.cell label { font-size: 36px; color: #666; font-weight: 500; position: relative; }
.cell b { margin-left: auto; font-size: 37px; font-weight: 600; color: #2c2c2c; letter-spacing: -.2px; }
.cell .red, .red { color: #d9302c; }
.cell sup { position: absolute; left: 72px; top: -15px; font-size: 18px; }
.info { width: 26px; height: 26px; border: 2px solid #aaa; border-radius: 50%; margin-left: 2px; background: radial-gradient(circle, #999 1.600px, transparent 2.200px) center / 6px 6px repeat-x; background-clip: content-box; padding: 0 2px; }
.info.pe { margin-left: 20px; }
.big { font-size: 76px; font-weight: 700; color: #f52020; letter-spacing: -1.500px; height: 82px; padding: 2px 0 0 1px; -webkit-text-stroke: 1px #f52020; }
.chg { height: 50px; display: flex; justify-content: space-between; align-items: center; font-size: 37px; font-weight: 600; color: #d9302c; padding-top: 3px; letter-spacing: -.3px; }
.end { justify-content: flex-end; }
.morebtn { width: 109px; height: 50px; border: 2px solid #e6e6e6; border-radius: 5px; font-size: 31px; font-weight: 500; display: flex; align-items: center; justify-content: center; }

.periods { height: 91px; border-bottom: 2px solid #dcdcdc; display: flex; align-items: center; font-size: 38px; font-weight: 500; color: #666; }
.periods span { width: 162.300px; height: 100%; display: flex; align-items: center; justify-content: center; position: relative; padding-top: 2px; }
.periods .on, .sections .on { color: #d65e16; }
.periods .on::after, .sections .on::after { content: ''; position: absolute; bottom: 7px; left: 50%; margin-left: -26.500px; width: 53px; height: 5.500px; border-radius: 3px; background: #d4601f; }
.periods .pm { justify-content: flex-start; padding-left: 42px; width: 190px; }
.pm i { border: 6px solid transparent; border-top: 10px solid #666; border-bottom: 0; margin-left: 9px; }

.legend { display: flex; align-items: center; font-size: 32px; font-weight: 600; white-space: nowrap; }
.ma { height: 54px; padding: 0 17px 0 16px; }
.pill { height: 40px; border: 2px solid #e6e9ee; border-radius: 6px; background: #f7faff; display: flex; align-items: center; font-weight: 500; color: #222; }
.dn { border: 6px solid transparent; border-top: 11px solid #666; border-bottom: 0; }
.avg { width: 94px; font-size: 31px; padding-left: 8px; }
.avg .dn { margin-left: 2px; }
.k1 { margin-left: 11px; width: 157px; color: #222; letter-spacing: .3px; }
.k2 { margin-left: 14px; width: 119px; color: #f0bd4d; letter-spacing: -.4px; }
.k3 { margin-left: 14px; width: 126px; color: #c0208a; letter-spacing: .3px; }
.dk { width: 111px; margin-left: auto; font-size: 31px; padding-left: 8px; }
.dk i { border-left: 10px solid transparent; border-bottom: 11px solid #222; margin: 14px 0 0 6px; }
.fq { width: 115px; margin-left: 40px; font-size: 31px; justify-content: center; }
.macd { height: 52px; padding: 0 0 0 17px; }
.macd .pill { width: 132px; padding-left: 3px; font-weight: 600; -webkit-text-stroke-width: .4px; }
.macd .dn { margin-left: auto; margin-right: 7px; }
.d1 { margin-left: 2px; width: 143px; letter-spacing: .6px; }
.d2 { margin-left: 21px; width: 158px; color: #f0c21e; letter-spacing: 1.300px; }
.d3 { margin-left: 20px; width: 117px; color: #cb2fdc; letter-spacing: .7px; }

.banner { height: 80px; margin: 15px 16px 0; border-radius: 40px; background: #ffece4; display: flex; align-items: center; padding-left: 25px; color: #d65a12; }
.msg { margin-left: 46px; width: 842px; font-size: 34px; font-weight: 500; white-space: nowrap; overflow: hidden; line-height: 46px; -webkit-mask-image: linear-gradient(90deg, #000 95%, transparent); mask-image: linear-gradient(90deg, #000 95%, transparent); }
.msg em { margin-right: -10px; margin-left: -2px; }
.bar { width: 1.500px; height: 32px; background: #dd7d48; margin-left: 14px; }
.x { margin-left: 14px; }

.sections { height: 92px; margin-top: 14px; border-top: 2px solid #dcdcdc; border-bottom: 2px solid #dcdcdc; padding: 0 33.500px; display: flex; font-size: 37.500px; font-weight: 500; color: #666; }
.sections span { flex: 1; display: flex; align-items: center; justify-content: center; position: relative; padding-top: 2px; }

.cards { height: 212px; display: flex; gap: 16px; padding: 11px 0 0 33px; }
.card { width: 472px; height: 184px; border-radius: 16px; background: linear-gradient(#fffbf5 40%, #fff); position: relative; padding: 26px 0 0 21px; }
.art { position: absolute; left: 0; top: 0; }
.ct { position: relative; display: flex; align-items: center; height: 42px; }
.ct strong { font-size: 36.500px; margin-left: 12px; font-weight: 700; }
.go { margin-left: 14px; }
.rank { position: relative; height: 34px; margin-top: 25px; font-size: 32.400px; color: #5a5a5a; display: flex; align-items: center; font-weight: 400; }
.rank b { color: #e04414; font-weight: 700; font-size: 34.500px; }
.r2 { margin-top: 21px; }
.r2 b { margin: 0 6px 0 5px; }
.r2 svg { margin-left: 0; }
.rank u { text-decoration: none; font-size: 29px; }
.vote { position: relative; display: flex; margin: 26px 0 0 5px; width: 421px; height: 79px; }
.vote > div { display: flex; align-items: center; }
.bull { width: 210px; background: #fddbd8; border-radius: 40px 0 0 40px; clip-path: polygon(0 0, 100% 0, 97.500% 100%, 0 100%); padding-left: 13px; color: #d4441f; }
.bear { width: 211px; background: #d7f0de; border-radius: 0 40px 40px 0; clip-path: polygon(1.500% 0, 100% 0, 100% 100%, 0 100%); padding-right: 13px; justify-content: flex-end; color: #3aa85c; }
.vote i { width: 64px; height: 64px; border-radius: 50%; background: #fff; display: flex; align-items: center; justify-content: center; }
.bull > div { margin-left: 21px; }
.bear > div { margin-right: 17px; }
.vote b, .vote span { display: block; }
.vote b { font-size: 31px; font-weight: 500; margin-top: -6px; }
.vote span { font-size: 24px; font-weight: 500; margin-top: 8px; -webkit-text-stroke-width: .5px; }

.sort { height: 124px; display: flex; align-items: center; padding: 0 43px; font-size: 38px; font-weight: 700; border-bottom: 2px solid #dcdcdc; position: relative; padding-top: 24px; }
.sort::after { content: ''; position: absolute; left: 78px; bottom: 4px; width: 32px; height: 5px; border-radius: 2px; background: #333; }
.ar { margin-left: 8px; }
.hot { margin-left: 53px; color: #666; }
.fl { margin-left: auto; }
.all { margin-left: 12px; font-size: 35.500px; font-weight: 500; color: #555; }

.trade { height: 117px; background: #f7faff; display: flex; }
.trade > * { flex: none; }
.index { width: 263px; position: relative; padding-left: 25px; }
.index i { position: absolute; left: 112px; top: 8px; border: 9px solid transparent; border-bottom: 7px solid #777; border-top: 0; }
.pt { font-size: 47px; font-weight: 600; color: #dc2a28; margin: 18px 0 0 10px; letter-spacing: .2px; }
.nm { display: flex; margin-top: -1px; align-items: center; }
.nm span { font-size: 42.500px; font-weight: 500; color: #555; }
.nm b { font-size: 36px; color: #dc2a28; margin-left: 27px; }
button { width: 191px; height: 84px; margin: 17px 12.500px 0 0; border: 0; padding: 0; border-radius: 14px; color: #fff; font-family: inherit; font-size: 39px; font-weight: 700; line-height: 1; }
.buy { background: linear-gradient(#fa4d47, #e9706c); }
.sell { background: linear-gradient(#3d78ff, #6a96fb); }
.op { display: flex; flex-direction: column; align-items: center; height: 117px; position: relative; }
.op label { font-size: 28px; color: #555; font-weight: 500; margin-top: auto; padding-bottom: 13px; -webkit-text-stroke-width: .5px; }
.op svg { margin-top: 11px; }
.o1 { width: 137px; }
.g { font-size: 46px; margin-top: 15px; -webkit-text-stroke: .5px currentColor; }
.o2 { width: 136px; }
.o3 { width: 136px; }
.op .dots { margin-top: 36px; gap: 10px; }
.op .dots b { width: 7px; height: 7px; background: #333; }

.sysnav { height: 125px; }
.foot { height: 236px; position: relative; display: flex; justify-content: space-between; background: linear-gradient(#d8dad9, #fff 18px); padding: 30px 41px 0 63px; }
.deco { position: absolute; right: 0; top: 0; }
.brand { padding-top: 25px; position: relative; }
.logo { display: flex; align-items: center; }
.logo span { font-size: 43px; font-weight: 700; color: #ff5a0a; margin-left: 11px; }
.brand p { margin-top: 26px; font-size: 32px; font-weight: 700; color: #333; }
.brand p em { margin-right: -8px; }
.qr { position: relative; width: 184px; height: 184px; background: #fff; margin-right: -4px; margin-top: -4px; padding: 4px; }
.mini { position: absolute; left: 77px; top: 77px; }
</style>
